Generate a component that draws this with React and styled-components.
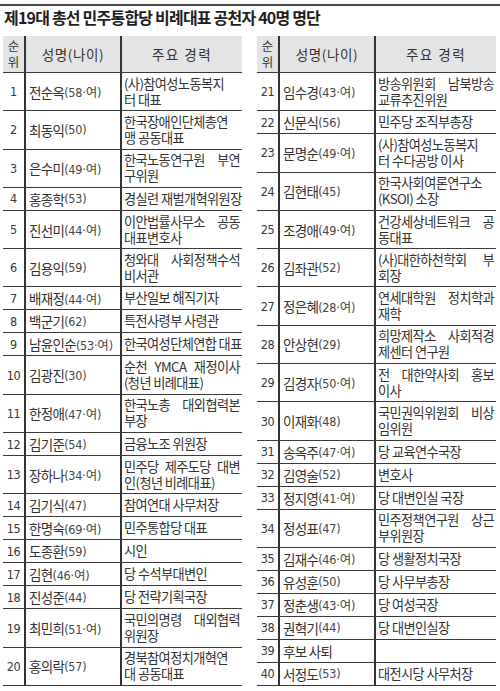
import styled, { createGlobalStyle } from "styled-components";

const GlobalStyle = createGlobalStyle`
  body {
    margin: 0;
    background: #fff;
  }
`;

const left = [
  ["1", "전순옥", "(58·여)", ["(사)참여성노동복지", "터 대표"]],
  ["2", "최동익", "(50)", ["한국장애인단체총연", "맹 공동대표"]],
  ["3", "은수미", "(49·여)", ["한국노동연구원 부연", "구위원"]],
  ["4", "홍종학", "(53)", ["경실련 재벌개혁위원장"]],
  ["5", "진선미", "(44·여)", ["이안법률사무소 공동", "대표변호사"]],
  ["6", "김용익", "(59)", ["청와대 사회정책수석", "비서관"]],
  ["7", "배재정", "(44·여)", ["부산일보 해직기자"]],
  ["8", "백군기", "(62)", ["특전사령부 사령관"]],
  ["9", "남윤인순", "(53·여)", ["한국여성단체연합 대표"]],
  ["10", "김광진", "(30)", ["순천 YMCA 재정이사", "(청년 비례대표)"]],
  ["11", "한정애", "(47·여)", ["한국노총 대외협력본", "부장"]],
  ["12", "김기준", "(54)", ["금융노조 위원장"]],
  ["13", "장하나", "(34·여)", ["민주당 제주도당 대변", "인(청년 비례대표)"]],
  ["14", "김기식", "(47)", ["참여연대 사무처장"]],
  ["15", "한명숙", "(69·여)", ["민주통합당 대표"]],
  ["16", "도종환", "(59)", ["시인"]],
  ["17", "김현", "(46·여)", ["당 수석부대변인"]],
  ["18", "진성준", "(44)", ["당 전략기획국장"]],
  ["19", "최민희", "(51·여)", ["국민의명령 대외협력", "위원장"]],
  ["20", "홍의락", "(57)", ["경북참여정치개혁연", "대 공동대표"]],
];

const right = [
  ["21", "임수경", "(43·여)", ["방송위원회 남북방송", "교류추진위원"]],
  ["22", "신문식", "(56)", ["민주당 조직부총장"]],
  ["23", "문명순", "(49·여)", ["(사)참여성노동복지", "터 수다공방 이사"]],
  ["24", "김현태", "(45)", ["한국사회여론연구소", "(KSOI) 소장"]],
  ["25", "조경애", "(49·여)", ["건강세상네트워크 공", "동대표"]],
  ["26", "김좌관", "(52)", ["(사)대한하천학회 부", "회장"]],
  ["27", "정은혜", "(28·여)", ["연세대학원 정치학과", "재학"]],
  ["28", "안상현", "(29)", ["희망제작소 사회적경", "제센터 연구원"]],
  ["29", "김경자", "(50·여)", ["전 대한약사회 홍보", "이사"]],
  ["30", "이재화", "(48)", ["국민권익위원회 비상", "임위원"]],
  ["31", "송옥주", "(47·여)", ["당 교육연수국장"]],
  ["32", "김영술", "(52)", ["변호사"]],
  ["33", "정지영", "(41·여)", ["당 대변인실 국장"]],
  ["34", "정성표", "(47)", ["민주정책연구원 상근", "부위원장"]],
  ["35", "김재수", "(46·여)", ["당 생활정치국장"]],
  ["36", "유성훈", "(50)", ["당 사무부총장"]],
  ["37", "정춘생", "(43·여)", ["당 여성국장"]],
  ["38", "권혁기", "(44)", ["당 대변인실장"]],
  ["39", "후보 사퇴", "", []],
  ["40", "서정도", "(53)", ["대전시당 사무처장"]],
];

const Page = styled.div`
  width: 500px;
  box-sizing: border-box;
  padding: 4px 4px 0 3px;
  font-family: "Noto Sans CJK KR", "DejaVu Sans", sans-serif;
  color: #333;
`;

const TopRule = styled.div`
  height: 2px;
  margin: 0 -4px 0 -3px;
  background: #4a4a4a;
`;

const Title = styled.h1`
  margin: 1px 0 0 1px;
  font-size: 16px;
  line-height: 20px;
  font-weight: 700;
  letter-spacing: -0.8px;
  color: #1e1e1e;
  white-space: nowrap;
`;

const Tables = styled.div`
  display: flex;
  gap: 15px;
  margin-top: 9px;
`;

const Table = styled.div`
  width: 239px;
  display: flex;
  flex-direction: column;
`;

const Row = styled.div`
  display: grid;
  grid-template-columns: 23px 96px 1fr;
  height: ${(p) => p.$h}px;
  box-sizing: border-box;
  border-bottom: 1px solid #3a3a3a;
  background: ${(p) => (p.$head ? "#e4e4e4" : "#fff")};
`;

const NumCell = styled.div`
  display: flex;
  align-items: center;
  justify-content: center;
  border-right: 2px solid #333;
  font-family: "DejaVu Sans Condensed", "Liberation Sans", sans-serif;
  font-stretch: condensed;
  font-size: 12.5px;
  letter-spacing: -0.4px;
  color: #383838;
`;

const NameCell = styled.div`
  display: flex;
  align-items: center;
  padding-left: 3px;
  border-right: 2px solid #333;
  font-size: 13.5px;
  letter-spacing: -0.7px;
  white-space: nowrap;
  color: #333;
`;

const Age = styled.span`
  font-family: "DejaVu Sans Condensed", "Noto Sans CJK KR", sans-serif;
  font-stretch: condensed;
  font-size: 12.5px;
  letter-spacing: -0.2px;
  color: #474747;
`;

const CareerCell = styled.div`
  display: flex;
  flex-direction: column;
  justify-content: center;
  padding: 0 2px 0 2px;
  font-size: 13.2px;
  line-height: 16px;
  letter-spacing: -0.6px;
  color: #333;
`;

const Line = styled.div`
  white-space: nowrap;
  text-align: left;
  text-align-last: ${(p) => (p.$full ? "justify" : "left")};
`;

const HeadNum = styled(NumCell)`
  flex-direction: column;
  font-family: "Noto Sans CJK KR", sans-serif;
  font-size: 12.5px;
  line-height: 16px;
  letter-spacing: 0;
  color: #333;
`;

const HeadCell = styled.div`
  display: flex;
  align-items: center;
  justify-content: center;
  border-right: ${(p) => (p.$last ? "none" : "2px solid #333")};
  font-size: 13.5px;
  letter-spacing: ${(p) => p.$spacing || "0"};
  color: #333;
`;

function Entry({ item }) {
  const [num, name, age, career] = item;
  const tall = career.length > 1;
  return (
    <Row $h={tall ? 38.3 : 23}>
      <NumCell>{num}</NumCell>
      <NameCell>
        {name}
        {age && <Age>{age}</Age>}
      </NameCell>
      <CareerCell>
        {career.map((line, i) => (
          <Line key={i} $full={i < career.length - 1}>
            {line}
          </Line>
        ))}
      </CareerCell>
    </Row>
  );
}

function ListTable({ rows }) {
  return (
    <Table>
      <Row $h={37} $head>
        <HeadNum>
          <span>순</span>
          <span>위</span>
        </HeadNum>
        <HeadCell $spacing="0.6px">성명(나이)</HeadCell>
        <HeadCell $last $spacing="1.5px">
          주요 경력
        </HeadCell>
      </Row>
      {rows.map((r) => (
        <Entry key={r[0]} item={r} />
      ))}
    </Table>
  );
}

export default function App() {
  return (
    <>
      <GlobalStyle />
      <Page>
        <TopRule />
        <Title>제19대 총선 민주통합당 비례대표 공천자 40명 명단</Title>
        <Tables>
          <ListTable rows={left} />
          <ListTable rows={right} />
        </Tables>
      </Page>
    </>
  );
}
